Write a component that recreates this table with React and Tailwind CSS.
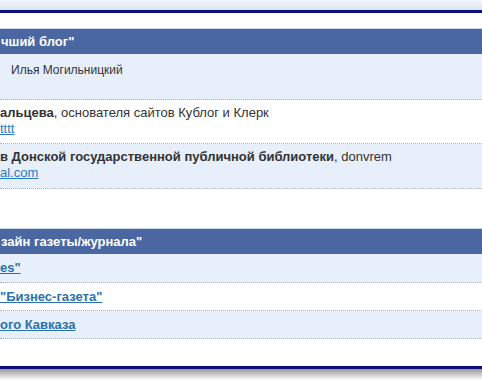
import React from "react";

const blogRows = [
  { bg: "bg-[#e7effb]", h: "h-[46px]", pt: "pt-[8px]", lines: [<span className="pl-[11px] text-[12px]">Илья Могильницкий</span>] },
  {
    bg: "bg-white",
    h: "h-[44px]",
    pt: "pt-[5px]",
    lines: [
      <span><b>альцева</b>, основателя сайтов Кублог и Клерк</span>,
      <a href="#" className="text-[#2a7cc0] underline">tttt</a>,
    ],
  },
  {
    bg: "bg-[#e7effb]",
    h: "h-[45px]",
    pt: "pt-[5px]",
    lines: [
      <span><b>в Донской государственной публичной библиотеки</b>, donvrem</span>,
      <a href="#" className="text-[#2a7cc0] underline">al.com</a>,
    ],
  },
];

const papers = [
  { name: "es\"", h: "h-[29px]", bg: "bg-[#e7effb]" },
  { name: "\"Бизнес-газета\"", h: "h-[28px]", bg: "bg-white" },
  { name: "ого Кавказа", h: "h-[28px]", bg: "bg-[#e7effb]" },
];

const Header = ({ children }) => (
  <div className="h-[26px] bg-[#4a67a1] text-white font-bold text-[13px] flex items-center pl-[1px] border-t border-[#c9d3e6]">
    {children}
  </div>
);

export default function App() {
  return (
    <div className="w-[482px] h-[380px] overflow-hidden bg-white text-[13px] leading-[16px] text-[#333]" style={{ fontFamily: "Arial, 'Liberation Sans', sans-serif" }}>
      <div className="h-[10px] bg-gradient-to-b from-[#f4f6fc] to-[#dce3f3]" />
      <div className="h-[3px] bg-[#0a0f7a]" />
      <div className="h-[15px]" />

      <Header>чший блог"</Header>
      {blogRows.map((r, i) => (
        <div key={i} className={`${r.h} ${r.bg} ${r.pt} border-b border-dotted border-[#a9b3c4] flex flex-col`}>
          {r.lines.map((l, j) => <div key={j}>{l}</div>)}
        </div>
      ))}
      <div className="h-[39px]" />

      <Header>зайн газеты/журнала"</Header>
      {papers.map((p) => (
        <div key={p.name} className={`${p.h} ${p.bg} border-b border-dotted border-[#a9b3c4] flex items-center`}>
          <a href="#" className="text-[#2a72ab] font-bold underline">{p.name}</a>
        </div>
      ))}
      <div className="h-[27px]" />
      <div className="h-[3px] bg-[#0a0f7a]" />
      <div className="h-[11px] bg-gradient-to-b from-[#9a9a9a] to-white" />
    </div>
  );
}
